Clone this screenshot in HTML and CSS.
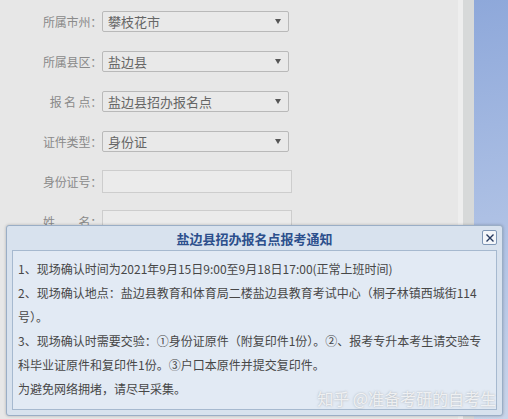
FILE: index.html
```html
<!DOCTYPE html>
<html lang="zh-CN">
<head>
  <meta charset="UTF-8">
  <title>报名点报考通知</title>
  <link rel="stylesheet" href="styles.css">
</head>
<body>
  <div class="page">
    <main class="form-area">
      <div class="form-row">
        <label>所属市州：</label>
        <div class="select"><span>攀枝花市</span><i class="arrow"></i></div>
      </div>
      <div class="form-row">
        <label>所属县区：</label>
        <div class="select"><span>盐边县</span><i class="arrow"></i></div>
      </div>
      <div class="form-row">
        <label>报 名 点：</label>
        <div class="select"><span>盐边县招办报名点</span><i class="arrow"></i></div>
      </div>
      <div class="form-row">
        <label>证件类型：</label>
        <div class="select"><span>身份证</span><i class="arrow"></i></div>
      </div>
      <div class="form-row">
        <label>身份证号：</label>
        <div class="text-input"></div>
      </div>
      <div class="form-row">
        <label>姓　　名：</label>
        <div class="text-input"></div>
      </div>
    </main>
    <div class="strip-light"></div>
    <div class="strip-dark"></div>
    <div class="side"></div>
  </div>

  <div class="dialog">
    <div class="dialog-title">
      <h2>盐边县招办报名点报考通知</h2>
      <button class="close" type="button">
        <svg width="10" height="10" viewBox="0 0 10 10"><path d="M1.5 1.5 L8.5 8.5 M8.5 1.5 L1.5 8.5" stroke="#26395f" stroke-width="1.4" fill="none"/></svg>
      </button>
    </div>
    <div class="dialog-body">
      <p>1、现场确认时间为2021年9月15日9:00至9月18日17:00(正常上班时间)</p>
      <p>2、现场确认地点：盐边县教育和体育局二楼盐边县教育考试中心（桐子林镇西城街114号）。</p>
      <p>3、现场确认时需要交验：①身份证原件（附复印件1份）。②、报考专升本考生请交验专科毕业证原件和复印件1份。③户口本原件并提交复印件。</p>
      <p>为避免网络拥堵，请尽早采集。</p>
    </div>
    <div class="watermark">知乎 @准备考研的自考生</div>
  </div>
</body>
</html>
```

FILE: styles.css
```css
body {
  margin: 0;
  font-family: "Noto Sans CJK SC", "Noto Sans", sans-serif;
  overflow: hidden;
}

.page {
  display: flex;
  width: 508px;
  height: 419px;
}

.form-area {
  width: 458px;
  background: #e7e7e7;
  padding-top: 11px;
  box-sizing: border-box;
}

.strip-light {
  width: 5px;
  background: #eeeeee;
}

.strip-dark {
  width: 11px;
  background: #d7d9d9;
}

.side {
  flex: 1;
  background: linear-gradient(170deg, #8ea8da 0%, #a9bde3 45%, #c9d5ea 100%);
}

.form-row {
  display: flex;
  align-items: center;
  height: 21px;
  margin-bottom: 19px;
}

.form-row label {
  width: 102px;
  text-align: right;
  font-size: 12px;
  color: #8a8a8a;
  box-sizing: border-box;
  letter-spacing: -0.2px;
}

.select {
  width: 187px;
  height: 21px;
  border: 1px solid #b9b9b9;
  border-radius: 2px;
  box-sizing: border-box;
  display: flex;
  align-items: center;
  justify-content: space-between;
  padding: 0 5px;
  font-size: 13px;
  color: #666;
  background: #e9e9e9;
}

.arrow {
  width: 0;
  height: 0;
  border-left: 3px solid transparent;
  border-right: 3px solid transparent;
  border-top: 5px solid #555;
  margin-right: 2px;
}

.text-input {
  width: 190px;
  height: 23px;
  border: 1px solid #cdcdcd;
  background: #ebebeb;
  box-sizing: border-box;
}

.dialog {
  position: absolute;
  left: 6px;
  top: 225px;
  width: 497px;
  height: 191px;
  background: #d8e2ee;
  border: 1px solid #9aaec6;
  border-radius: 3px;
  box-shadow: 0 0 3px rgba(0,0,0,0.25);
  box-sizing: border-box;
  padding: 0 5px 5px 5px;
  display: flex;
  flex-direction: column;
}

.dialog-title {
  height: 24px;
  display: flex;
  align-items: center;
  justify-content: center;
  position: relative;
}

.dialog-title h2 {
  margin: 0;
  font-size: 13px;
  font-weight: bold;
  color: #2c4f8c;
}

.close {
  position: absolute;
  right: 0;
  top: 4px;
  width: 15px;
  height: 15px;
  padding: 0;
  border: 1px solid #7f97b6;
  border-radius: 2px;
  background: #f3f6fa;
  display: flex;
  align-items: center;
  justify-content: center;
}

.dialog-body {
  flex: 1;
  background: #e2eaf4;
  border: 1px solid #a6b9cf;
  padding: 6px 6px 0 5px;
  font-size: 12px;
  line-height: 24px;
  color: #474747;
}

.dialog-body p {
  margin: 0;
}

.watermark {
  position: absolute;
  right: 6px;
  bottom: 5px;
  font-size: 16px;
  color: rgba(255,255,255,0.75);
  text-shadow: 0 0 2px rgba(110,110,110,0.5);
}
```
